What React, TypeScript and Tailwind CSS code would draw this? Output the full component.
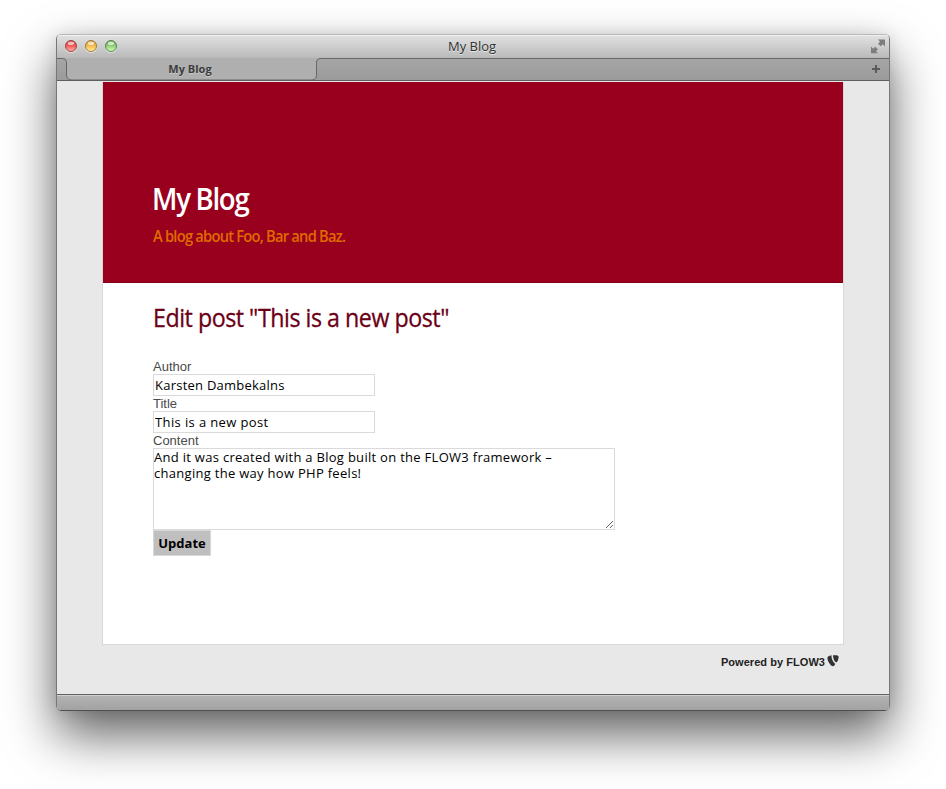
import React from 'react';

const SANS = "font-['Open_Sans','Noto_Sans',sans-serif]";

function Light({ id, edge, dark, mid, glow }: { id: string; edge: string; dark: string; mid: string; glow: string }) {
  return (
    <svg width="14" height="15" viewBox="0 0 14 15" className="block">
      <defs>
        <linearGradient id={id} x1="0" y1="0" x2="0" y2="1">
          <stop offset="0" stopColor={dark} />
          <stop offset="0.5" stopColor={mid} />
          <stop offset="1" stopColor={glow} />
        </linearGradient>
      </defs>
      <circle cx="7" cy="8" r="6" fill="#ececec" opacity="0.8" />
      <circle cx="7" cy="7" r="5.5" fill={`url(#${id})`} stroke={edge} strokeWidth="1" />
      <ellipse cx="7" cy="4.2" rx="3.2" ry="1.8" fill="#fff" opacity="0.65" />
    </svg>
  );
}

function TitleBar() {
  return (
    <header className="relative flex h-[23px] items-center bg-linear-to-b from-[#e2e2e2] to-[#b9b9b9] pl-[7px] pr-[3px] shadow-[inset_0_1px_0_#f0f0f0]">
      <div className="flex gap-[6px]">
        <Light id="close" edge="#9b4340" dark="#c8322f" mid="#ee5f5c" glow="#ffb9b0" />
        <Light id="minimise" edge="#a07a35" dark="#cf922c" mid="#f5bd55" glow="#fff2a0" />
        <Light id="zoom" edge="#55884a" dark="#58a047" mid="#93d07c" glow="#d8ffc0" />
      </div>
      <h1 className={`${SANS} absolute left-[391px] top-[2px] whitespace-nowrap text-[13px] leading-[18px] text-[#303030] [text-shadow:0_1px_0_#e8e8e8]`}>My Blog</h1>
      <svg width="16" height="15" viewBox="0 0 16 15" className="ml-auto block" fill="#7d7d7d">
        <path d="M8 .5h7v7l-2.200-2.200-2 2-1.300-1.300-1.500-1.300 2-2z" />
        <path d="M1 7.500l2.200 2.200 2-2 1.300 1.300 1.500 1.300-2 2 2 2H1z" />
      </svg>
    </header>
  );
}

function TabBar() {
  return (
    <nav className="relative flex h-[23px] items-center border-b border-[#5e5e5e] bg-linear-to-b from-[#a6a6a6] to-[#9b9b9b] pr-[8px]">
      <svg width="832" height="22" viewBox="0 0 832 22" className="absolute left-0 top-0">
        <path d="M5 0C9 0 9.500 2 9.500 5V17Q9.500 22 14 22H255Q259.500 22 259.500 17V5C259.500 2 260 0 264 0Z" fill="#afafaf" />
        <path d="M0 .5H5Q9.500 .5 9.500 5V17Q9.500 21.500 14 22H255Q259.500 21.500 259.500 17V5Q259.500 .5 264 .5H832" fill="none" stroke="#666" />
      </svg>
      <div className={`${SANS} relative ml-[10px] w-[246px] pb-px text-center text-[11px] font-bold leading-[16px] text-[#3c3c3c] [text-shadow:0_1px_0_#c8c8c8]`}>My Blog</div>
      <svg width="10" height="10" viewBox="0 0 10 10" className="relative ml-auto block">
        <path d="M1 5h8M5 1v8" stroke="#5a5a5a" strokeWidth="2" />
      </svg>
    </nav>
  );
}

function Page() {
  const label = "block h-[15px] font-['Liberation_Sans',Arial,sans-serif] text-[13px] leading-[15px] text-[#4a4a4a]";
  const field = `${SANS} block h-[22px] w-[222px] border border-[#dadada] bg-white px-px text-[13px] leading-[18px] text-black outline-none`;
  return (
    <main className="h-[613px] bg-[#e8e8e8] pl-[45px] pt-px">
      <div className="h-[563px] w-[742px] border-x border-b border-[#d8d8d8] bg-white">
        <div className={`${SANS} h-[201px] border-b border-[#850019] bg-[#99001e] pl-[50px] pt-[97px]`}>
          <h2 className="-ml-px origin-left scale-x-[.92] whitespace-nowrap text-[30px] font-semibold leading-[40px] tracking-[-1.400px] text-white">My Blog</h2>
          <p className="mt-[6px] origin-left scale-x-[.92] whitespace-nowrap text-[16px] font-semibold leading-[22px] tracking-[-0.850px] text-[#e06a00]">A blog about Foo, Bar and Baz.</p>
        </div>
        <div className="pl-[50px] pt-[17px]">
          <h3 className={`${SANS} h-[59px] origin-left scale-x-[.93] whitespace-nowrap text-[25px] leading-[34px] tracking-[-0.520px] text-[#6b0016] [-webkit-text-stroke:0.3px_#6b0016]`}>Edit post "This is a new post"</h3>
          <form>
            <label className={label} htmlFor="author">Author</label>
            <input id="author" className={`${field} tracking-[0.240px]`} defaultValue="Karsten Dambekalns" />
            <label className={label} htmlFor="title">Title</label>
            <input id="title" className={`${field} tracking-[0.380px]`} defaultValue="This is a new post" />
            <label className={label} htmlFor="content">Content</label>
            <textarea
              id="content"
              className={`${SANS} block h-[82px] w-[462px] resize overflow-hidden whitespace-pre border border-[#dadada] bg-white p-0 text-[13px] leading-[16px] tracking-[0.290px] text-black outline-none`}
              defaultValue={'And it was created with a Blog built on the FLOW3 framework –\nchanging the way how PHP feels!'}
            />
            <button type="button" className={`${SANS} block h-[26px] w-[58px] border border-[#d8d8d8] bg-[#bfbfbf] text-center text-[13px] font-bold leading-[24px] text-black`}>Update</button>
          </form>
        </div>
      </div>
      <footer className="flex w-[742px] justify-end pr-[5px] pt-[9px]">
        <span className="whitespace-nowrap font-['Liberation_Sans',Arial,sans-serif] text-[11px] font-bold leading-[17px] tracking-[0.050px] text-[#222]">Powered by FLOW3</span>
        <svg width="12" height="12" viewBox="0 0 12 12" className="ml-[2px] mt-px block" fill="#333">
          <path d="M4.500 .3C4.300 3.500 6 7.500 8.300 8.800C7.800 10.300 7 11.300 6 11.300C3.800 11.300 .4 6.200 .4 3C.4 1.500 2 .7 4.500 .3Z" />
          <path d="M6 .3C8.500 0 11.600 .2 11.600 1.700C11.600 4 10.300 7.300 9.200 7.300C7.800 7.300 6 3.800 6 .3Z" />
        </svg>
      </footer>
    </main>
  );
}

export default function App() {
  return (
    <div className="h-[789px] w-[946px] overflow-hidden bg-white pl-[56px] pt-[34px]">
      <div className="h-[677px] w-[834px] overflow-hidden rounded-[5px] border border-[#777] border-t-[#b8b8b8] border-b-[#505050] shadow-[0_24px_50px_rgba(0,0,0,0.62),0_0_16px_rgba(0,0,0,0.1)]">
        <TitleBar />
        <TabBar />
        <Page />
        <div className="h-[16px] border-t border-[#606060] bg-linear-to-b from-[#b4b4b4] to-[#a2a2a2] shadow-[inset_0_1px_0_#d0d0d0]" />
      </div>
    </div>
  );
}
